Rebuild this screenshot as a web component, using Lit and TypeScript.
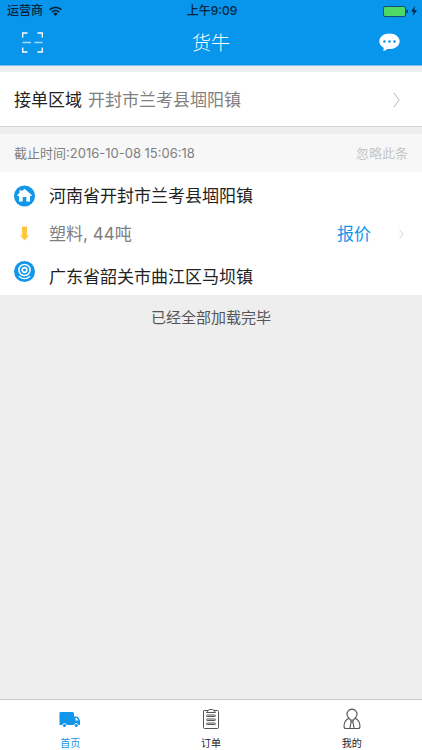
import { LitElement, html, css, svg } from "lit";
import { customElement, property } from "lit/decorators.js";
import { classMap } from "lit/directives/class-map.js";

const chevron = html`<svg class="chevron" viewBox="0 0 8 16" aria-hidden="true">
  <path d="M1 1 L6 8 L1 15" fill="none" stroke="#c8c8c8" stroke-width="1.2" />
</svg>`;

const tabIcons = {
  truck: svg`
    <path fill="#1296ea" d="M1.5 5H13.5Q15 5 15 6.5V9.500H17.500Q18.600 9.500 19.300 10.500L20.800 13Q21 13.400 21 14V18H19.700A2.500 2.500 0 0 0 14.900 18H7.900A2.500 2.500 0 0 0 3.100 18H.5V6Q.5 5 1.500 5Z"/>
    <path fill="#fff" d="M16.500 11H17.800L19.400 13.600H16.500Z"/>
    <circle cx="5.500" cy="18.500" r="1.600" fill="#1296ea"/>
    <circle cx="17.300" cy="18.500" r="1.600" fill="#1296ea"/>`,
  list: svg`
    <g fill="none" stroke="#555">
      <path d="M8 3.500H4Q3.500 3.500 3.500 4V20.500Q3.500 21.500 4.500 21.500H17.500Q18.500 21.500 18.500 20.500V4.500Q18.500 3.500 17.500 3.500H14"/>
      <path d="M6.500 5.500H15.500L14 3.500L12.500 2.500H9.500L8 3.500Z"/>
      <rect x="6.500" y="8" width="9" height="1.500" rx=".7"/>
      <rect x="6.500" y="12" width="9" height="1.500" rx=".7"/>
      <rect x="6.500" y="16" width="9" height="1.500" rx=".7"/>
    </g>`,
  person: svg`
    <g fill="none" stroke="#555" stroke-width="1.100">
      <path d="M8.200 11.300A5 5 0 1 1 13.800 11.300C17 12.500 19 15.500 19 19.500Q19 21.500 17 21.500H5Q3 21.500 3 19.500C3 15.500 5 12.500 8.200 11.300"/>
      <path d="M8.200 11.300L9.700 13.500M13.800 11.300L12.300 13.500M9.700 13H12.300L11.900 15L13.200 21.500M9.700 13L10.100 15L8.800 21.500M10.100 15H11.900"/>
    </g>`,
};

@customElement("status-bar")
class StatusBar extends LitElement {
  static styles = css`
    :host {
      display: grid;
      grid-template-columns: 1fr auto 1fr;
      align-items: center;
      box-sizing: border-box;
      height: 20px;
      padding: 2px 5px 0 7px;
      font-size: 12px;
      line-height: 18px;
      color: #06243c;
      font-weight: 500;
    }
    .side { display: flex; align-items: center; gap: 6px; }
    .end { justify-content: flex-end; gap: 3px; }
    .wifi { width: 13px; height: 10px; }
    .battery { width: 25px; height: 11px; }
    .bolt { width: 6px; height: 10px; }
  `;
  render() {
    return html`
      <div class="side">
        <span>运营商</span>
        <svg class="wifi" viewBox="0 0 13 10" aria-hidden="true">
          <g fill="none" stroke="#06243c" stroke-width="1.700">
            <path d="M.7 3.700A8.300 8.300 0 0 1 12.300 3.700" />
            <path d="M2.800 6A5.300 5.300 0 0 1 10.200 6" />
          </g>
          <path d="M4.200 7.500A3.300 3.300 0 0 1 8.800 7.500L6.500 9.900Z" fill="#06243c" />
        </svg>
      </div>
      <span>上午9:09</span>
      <div class="side end">
        <svg class="battery" viewBox="0 0 25 11" aria-hidden="true">
          <rect x=".5" y=".5" width="22" height="10" rx="1.500" fill="#4cd964" stroke="#12507a" />
          <path d="M23.500 3.500Q25 4 25 5.500T23.500 7.500Z" fill="#06243c" />
        </svg>
        <svg class="bolt" viewBox="0 0 6 10" aria-hidden="true">
          <path d="M4 0L0 5.600H2.600L1.700 10L6 4.200H3.300Z" fill="#06243c" />
        </svg>
      </div>
    `;
  }
}

@customElement("nav-header")
class NavHeader extends LitElement {
  static styles = css`
    :host {
      display: grid;
      grid-template-columns: 1fr auto 1fr;
      align-items: center;
      height: 45px;
      padding: 0 22px;
    }
    .title { margin: 0; padding-top: 2px; font-size: 19px; line-height: 28px; font-weight: 300; color: #fff; }
    .action { display: flex; padding: 0; border: 0; background: none; cursor: pointer; }
    .end { justify-self: end; }
    .icon { width: 21px; height: 22px; }
  `;
  render() {
    return html`
      <button class="action" aria-label="扫一扫">
        <svg class="icon" viewBox="0 0 21 22" fill="none" stroke="#d8f0ff" stroke-width="1.300">
          <path d="M.7 5.500V1H5.500M15.500 1H20.300V5.500M.7 15.500V20H5.500M15.500 20H20.300V15.500" stroke="#fff" />
          <path d="M.5 10.500H9M12.500 10.500H20.500" stroke-width="1.600" stroke="#a8dcfa" />
        </svg>
      </button>
      <h1 class="title">货牛</h1>
      <button class="action end" aria-label="消息">
        <svg class="icon" viewBox="0 0 21 22">
          <path fill="#fff" d="M10.500 1.500C16.300 1.500 20.700 4.900 20.700 9.300S16.300 17.100 10.500 17.100Q9.300 17.100 8.200 16.900Q6.500 18.800 4.200 19.100Q4.800 17.500 4.600 15.700C2 14.300 .3 12 .3 9.300C.3 4.900 4.700 1.500 10.500 1.500Z" />
          <g fill="#0895ec">
            <circle cx="5.500" cy="9.500" r="1.300" /><circle cx="10.500" cy="9.500" r="1.300" /><circle cx="15.500" cy="9.500" r="1.300" />
          </g>
        </svg>
      </button>
    `;
  }
}

@customElement("region-row")
class RegionRow extends LitElement {
  @property() region = "";
  static styles = css`
    :host { display: block; border-bottom: 1px solid #d4d4d4; background: #fff; }
    .row {
      display: flex;
      align-items: center;
      gap: 6px;
      box-sizing: border-box;
      width: 100%;
      height: 54px;
      padding: 2px 21px 0 14px;
      color: #808080;
      font-size: 17px;
      line-height: 24px;
      text-decoration: none;
    }
    .label { color: #222; }
    .value { flex: 1; }
    .chevron { width: 8px; height: 16px; }
  `;
  render() {
    return html`<a class="row" href="#region">
      <span class="label">接单区域</span><span class="value">${this.region}</span>${chevron}
    </a>`;
  }
}

@customElement("order-card")
class OrderCard extends LitElement {
  @property() deadline = "";
  @property() from = "";
  @property() to = "";
  @property() cargo = "";
  static styles = css`
    :host { display: block; background: #fff; }
    .head {
      display: flex;
      align-items: center;
      justify-content: space-between;
      height: 38px;
      padding: 0 14px;
      background: #f7f7f7;
      color: #808080;
      font-size: 13px;
      line-height: 18px;
    }
    .plain { padding: 0; border: 0; background: none; font: inherit; cursor: pointer; }
    .ignore { color: #c6c6c6; }
    .body { padding: 12px 18px 6px 14px; font-size: 17px; line-height: 24px; color: #222; }
    .stop { display: flex; align-items: center; gap: 14px; }
    .goal { align-items: flex-start; }
    .goal .place { padding-top: 4px; }
    .cargo { display: flex; align-items: center; gap: 14px; padding: 14px 0 15px; color: #808080; }
    .goods { flex: 1; }
    .quote { color: #1296ea; }
    .cargo .chevron { width: 5px; height: 10px; margin-left: 14px; }
    .mark { flex: none; width: 21px; height: 22px; }
  `;
  render() {
    return html`
      <div class="head">
        <span>截止时间:${this.deadline}</span>
        <button class="plain ignore">忽略此条</button>
      </div>
      <div class="body">
        <div class="stop">
          <svg class="mark" viewBox="0 0 21 22" aria-hidden="true">
            <circle cx="10.500" cy="11" r="10.500" fill="#1296ea" />
            <path fill="#fff" d="M10.500 3.800L18 10.300L17 11.300L16 10.500V16.500H12.300V12H8.700V16.500H5V10.500L4 11.300L3 10.300L5.500 8.100V5.300H7.500V6.400Z" />
            <path fill="#1296ea" d="M9.500 12.800H11.500V16.500H9.500Z" opacity=".6" />
          </svg>
          <span class="place">${this.from}</span>
        </div>
        <div class="cargo">
          <svg class="mark" viewBox="0 0 21 22" aria-hidden="true">
            <path fill="#ffc740" d="M8 3.500H13V12.500H15L10.500 17.500L6 12.500H8Z" />
          </svg>
          <span class="goods">${this.cargo}</span>
          <button class="plain quote">报价</button>
          ${chevron}
        </div>
        <div class="stop goal">
          <svg class="mark" viewBox="0 0 21 22" aria-hidden="true">
            <circle cx="10.500" cy="10.500" r="10.500" fill="#1296ea" />
            <g fill="none" stroke="#fff">
              <circle cx="10.500" cy="9" r="5.600" stroke-width="1.500" />
              <circle cx="10.500" cy="9" r="2.300" stroke-width="1.700" />
              <path d="M4.800 15.300Q10.500 20 16.200 15.300" stroke-width="1.300" />
            </g>
          </svg>
          <span class="place">${this.to}</span>
        </div>
      </div>
    `;
  }
}

@customElement("tab-bar")
class TabBar extends LitElement {
  static styles = css`
    :host { display: block; border-top: 1px solid #c9c9c9; background: #fff; }
    .tabs { display: grid; grid-template-columns: repeat(3, 1fr); height: 50px; }
    .tab {
      display: flex;
      flex-direction: column;
      align-items: center;
      gap: 5px;
      padding-top: 7px;
      color: #222;
      font-size: 10px;
      line-height: 14px;
      text-decoration: none;
    }
    .active { color: #1296ea; }
    .glyph { width: 22px; height: 24px; }
  `;
  private tabs = [
    { label: "首页", href: "#home", icon: tabIcons.truck, active: true },
    { label: "订单", href: "#orders", icon: tabIcons.list, active: false },
    { label: "我的", href: "#me", icon: tabIcons.person, active: false },
  ];
  render() {
    return html`<nav class="tabs">
      ${this.tabs.map(
        (t) => html`<a href=${t.href} class=${classMap({ tab: true, active: t.active })}>
          <svg class="glyph" viewBox="0 0 22 24" aria-hidden="true">${t.icon}</svg>
          <span>${t.label}</span>
        </a>`
      )}
    </nav>`;
  }
}

@customElement("app-root")
class AppRoot extends LitElement {
  static styles = css`
    :host {
      display: flex;
      flex-direction: column;
      min-height: 100vh;
      background: #eee;
      font-family: Inter, "Noto Sans CJK SC", sans-serif;
    }
    .top { background: #0895ec; border-bottom: 1px solid #7fbfe8; }
    .content { flex: 1; display: flex; flex-direction: column; gap: 7px; padding-top: 6px; }
    .done { margin: 4px 0 0; text-align: center; font-size: 15px; line-height: 24px; color: #555; }
  `;
  render() {
    return html`
      <header class="top">
        <status-bar></status-bar>
        <nav-header></nav-header>
      </header>
      <main class="content">
        <region-row region="开封市兰考县堌阳镇"></region-row>
        <order-card
          deadline="2016-10-08 15:06:18"
          from="河南省开封市兰考县堌阳镇"
          to="广东省韶关市曲江区马坝镇"
          cargo="塑料, 44吨"
        ></order-card>
        <p class="done">已经全部加载完毕</p>
      </main>
      <tab-bar></tab-bar>
    `;
  }
}
